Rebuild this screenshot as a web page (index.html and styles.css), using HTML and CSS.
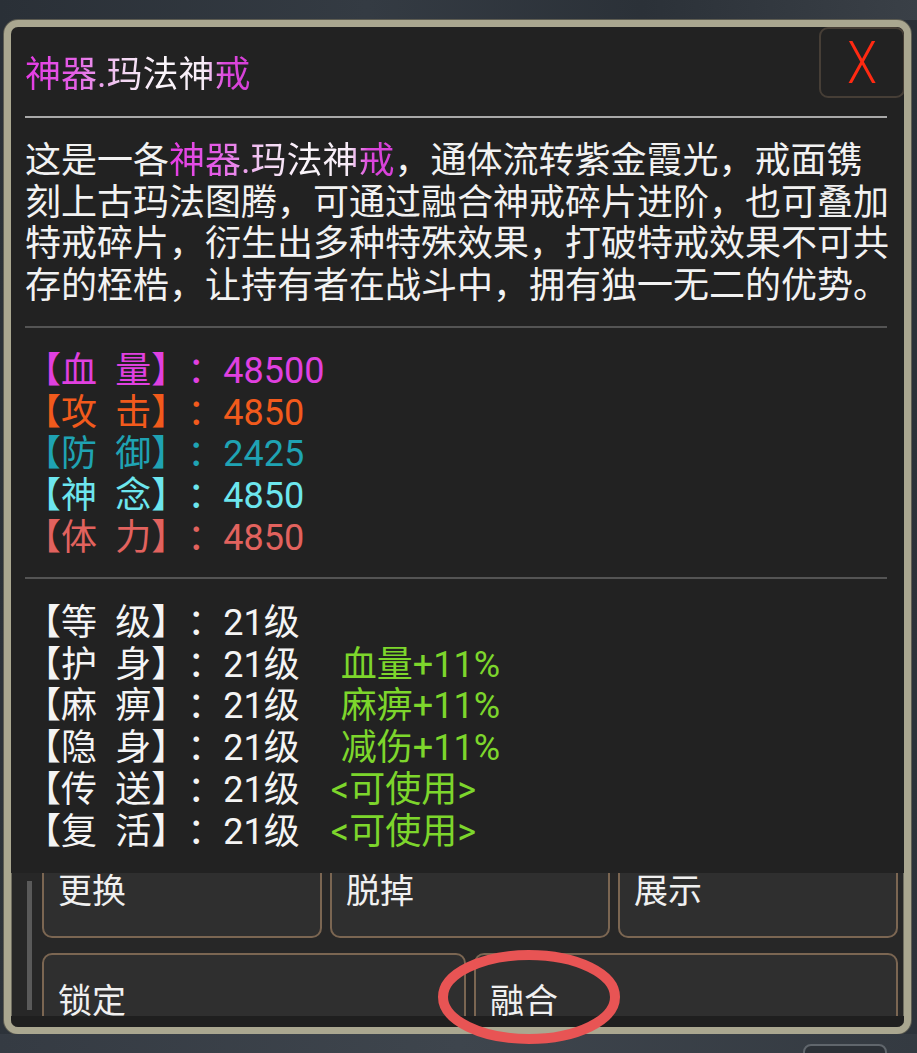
FILE: index.html
```html
<!DOCTYPE html>
<html lang="zh-CN">
<head>
  <meta charset="UTF-8">
  <meta name="viewport" content="width=device-width, initial-scale=1.0">
  <title>神器.玛法神戒</title>
  <link rel="stylesheet" href="styles.css">
</head>
<body>
<div class="scene">
  <div class="sky"></div>
  <div class="frame">
    <div class="panel">
      <div class="head">
        <h1 class="title"><span class="artifact">神器.玛法神戒</span></h1>
        <button class="close"><span class="close-x">X</span></button>
      </div>
      <div class="body">
        <hr class="rule rule-main">
        <p class="desc">这是一各<span class="artifact">神器.玛法神戒</span>，通体流转紫金霞光，戒面镌<br>刻上古玛法图腾，可通过融合神戒碎片进阶，也可叠加<br>特戒碎片，衍生出多种特殊效果，打破特戒效果不可共<br>存的桎梏，让持有者在战斗中，拥有独一无二的优势。</p>
        <hr class="rule">
        <ul class="stats">
          <li class="hp">【血&ensp;量】：48500</li>
          <li class="atk">【攻&ensp;击】：4850</li>
          <li class="def">【防&ensp;御】：2425</li>
          <li class="mind">【神&ensp;念】：4850</li>
          <li class="vit">【体&ensp;力】：4850</li>
        </ul>
        <hr class="rule">
        <ul class="levels">
          <li>【等&ensp;级】：21级</li>
          <li>【护&ensp;身】：21级<span class="bonus">血量+11%</span></li>
          <li>【麻&ensp;痹】：21级<span class="bonus">麻痹+11%</span></li>
          <li>【隐&ensp;身】：21级<span class="bonus">减伤+11%</span></li>
          <li>【传&ensp;送】：21级<span class="bonus usable">&lt;可使用&gt;</span></li>
          <li>【复&ensp;活】：21级<span class="bonus usable">&lt;可使用&gt;</span></li>
        </ul>
      </div>
    </div>
    <div class="actions">
      <div class="scrollbar"></div>
      <div class="list">
        <div class="row row-three">
          <button class="action">更换</button>
          <button class="action">脱掉</button>
          <button class="action">展示</button>
        </div>
        <div class="row row-two">
          <button class="action">锁定</button>
          <button class="action">融合</button>
        </div>
      </div>
    </div>
    <div class="frame-foot"></div>
  </div>
  <div class="floor">
    <div class="floor-tab"></div>
  </div>
  <svg class="mark" width="200" height="110" viewBox="0 0 200 110">
    <ellipse cx="100" cy="55" rx="86" ry="42" fill="none" stroke="#e85454" stroke-width="10"/>
  </svg>
</div>
</body>
</html>
```

FILE: styles.css
```css
body {
  margin: 0;
  padding: 0;
  background-color: #343a41;
  font-family: Roboto, "Noto Sans CJK SC", sans-serif;
  color: #f2f2f2;
  text-spacing-trim: space-all;
}
.scene {
  position: relative;
  width: 917px;
  height: 1053px;
  overflow: hidden;
  background: linear-gradient(180deg, #2a3037 0%, #2d333a 100%);
}
.sky {
  height: 20px;
  background: linear-gradient(90deg, #2a3037, #343b43 40%, #2b3138 70%, #3a4047);
}
.frame {
  margin: 0 6px 0 4px;
  height: 1000px;
  border: 7px solid #aaa790;
  border-radius: 14px;
  background-color: #272727;
  overflow: hidden;
  box-shadow: 0 0 0 1px #5d5c52, inset 0 0 0 1px #6f6d60;
}
.panel {
  height: 846px;
  overflow: hidden;
  background-color: #222;
  border-radius: 7px 7px 0 0;
}
.head {
  display: flex;
  justify-content: space-between;
  height: 71px;
  padding-left: 14px;
}
.title {
  margin: 27px 0 0;
  font-size: 36px;
  font-weight: 400;
  line-height: 42px;
}
.artifact {
  background: linear-gradient(90deg, #e43ae4 0%, #e45ee6 22%, #f2d2f2 42%, #fbf7fb 60%, #f6eaf6 80%, #dc46dc 88%, #d63fd8 100%);
  -webkit-background-clip: text;
  background-clip: text;
  color: transparent;
}
.close {
  width: 86px;
  height: 71px;
  margin-right: -1px;
  padding: 0;
  background-color: #222;
  border: 2px solid #463e36;
  border-radius: 9px;
  color: #ff2a12;
  font-family: Roboto, sans-serif;
  font-size: 59px;
  font-weight: 300;
  line-height: 1;
  cursor: pointer;
}
.close-x {
  display: inline-block;
  transform: scaleX(0.82);
}
.body {
  padding: 0 17px 0 14px;
}
.rule {
  margin: 0;
  height: 0;
  border: none;
  border-top: 2px solid #545454;
}
.rule-main {
  margin-top: 18px;
  border-top-color: #a9a9a9;
}
.desc {
  margin: 23px 0 18px;
  font-size: 36px;
  line-height: 41.7px;
  white-space: nowrap;
}
.stats,
.levels {
  list-style: none;
  margin: 23px 0 17px;
  padding: 0;
  font-size: 36px;
  line-height: 41.8px;
  white-space: nowrap;
}
.hp {
  color: #e040e0;
}
.atk {
  color: #f25a1c;
}
.def {
  color: #1fa3b3;
}
.mind {
  color: #6de6ee;
}
.vit {
  color: #e2625e;
}
.levels {
  margin-top: 24px;
  color: #f4f4f4;
}
.bonus {
  margin-left: 41px;
  color: #7dd62c;
}
.usable {
  margin-left: 31px;
}
.actions {
  display: flex;
  height: 143px;
  overflow: hidden;
}
.scrollbar {
  width: 5px;
  height: 129px;
  margin: 8px 0 0 16px;
  background-color: #5a5a5a;
}
.list {
  flex: 1;
  margin: -30px 6px 0 10px;
}
.row {
  display: grid;
  gap: 8px;
  margin-bottom: 15px;
}
.row-three {
  grid-template-columns: 1fr 1fr 1fr;
}
.row-two {
  grid-template-columns: 1fr 1fr;
}
.action {
  height: 95px;
  padding: 0 0 0 14px;
  text-align: left;
  background-color: #2f2f2f;
  border: 2px solid #7b6652;
  border-radius: 10px;
  color: #f0f0f0;
  font-family: Roboto, "Noto Sans CJK SC", sans-serif;
  font-size: 34px;
  line-height: 1;
  cursor: pointer;
}
.frame-foot {
  height: 11px;
  background-color: #1f1f1f;
}
.floor {
  height: 19px;
  background: linear-gradient(90deg, #353b43, #3e454d 50%, #343a41);
  overflow: hidden;
}
.floor-tab {
  width: 80px;
  height: 20px;
  margin: 10px 0 0 803px;
  border: 2px solid #60666c;
  border-radius: 8px 8px 0 0;
  background-color: #2c3137;
}
.mark {
  position: absolute;
  left: 429px;
  top: 942px;
}
```
